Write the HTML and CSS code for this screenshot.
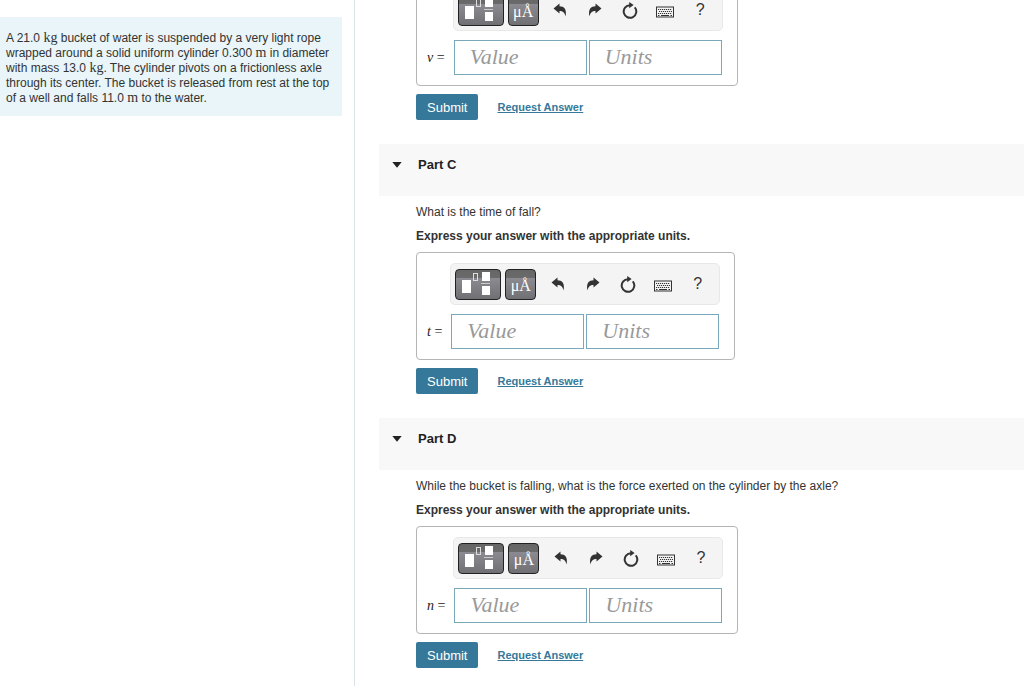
FILE: index.html
```html
<!DOCTYPE html>
<html lang="en">
<head>
    <meta charset="UTF-8">
    <meta name="viewport" content="width=device-width, initial-scale=1.0">
    <title>Bucket and Cylinder</title>
    <link rel="stylesheet" href="styles.css">
</head>
<body>
    <!-- toolbar icons -->
    <svg class="sprite" aria-hidden="true">
        <symbol id="icon-template" viewBox="0 0 28 24">
            <rect x="0" y="8" width="9" height="13" fill="#fff"/>
            <rect x="11.5" y="1.5" width="4" height="7" fill="none" stroke="#ddd"/>
            <rect x="20" y="0" width="8" height="9" fill="#fff"/>
            <rect x="19" y="11" width="9" height="1" fill="#ccc"/>
            <rect x="20" y="14" width="8" height="9" fill="#fff"/>
        </symbol>
        <symbol id="icon-undo" viewBox="0 0 14 14">
            <path d="M0.5 5.5 6.5 0.5V3.2C11 3.2 14 6 12.6 13.5 11.5 9.5 10 8 6.5 8V10.5Z"/>
        </symbol>
        <symbol id="icon-redo" viewBox="0 0 14 14">
            <path d="M13.5 5.5 7.5 0.5V3.2C3 3.2 0 6 1.4 13.5 2.5 9.5 4 8 7.5 8V10.5Z"/>
        </symbol>
        <symbol id="icon-reset" viewBox="0 0 16 17">
            <path d="M12.7 5.3A6.3 6.3 0 1 1 8 3.2" fill="none" stroke="#333" stroke-width="2"/>
            <path d="M7.2 0 11.6 3.1 7.2 6.2Z"/>
        </symbol>
        <symbol id="icon-keyboard" viewBox="0 0 18 12">
            <rect x="0.5" y="1" width="17" height="10" fill="#f4f4f4" stroke="#333"/>
            <path d="M2 3.5H16M3 5.5H16M2 7.5H16" fill="none" stroke="#333" stroke-dasharray="1.2 0.8"/>
            <path d="M2 9.5H3.5M5 9.5H13M14.5 9.5H16" fill="none" stroke="#333"/>
        </symbol>
        <symbol id="icon-caret" viewBox="0 0 10 6">
            <path d="M0.3 0H9.7L5 5.7Z"/>
        </symbol>
    </svg>

    <div class="page">
        <aside class="sidebar">
            <p class="problem">A 21.0 <span class="unit">kg</span> bucket of water is suspended by a very light rope wrapped around a solid uniform cylinder 0.300 <span class="unit">m</span> in diameter with mass 13.0 <span class="unit">kg</span>. The cylinder pivots on a frictionless axle through its center. The bucket is released from rest at the top of a well and falls 11.0 <span class="unit">m</span> to the water.</p>
        </aside>

        <main class="parts">
            <section class="part part-scrolled">
                <form class="part-body">
                    <div class="answer-box">
                        <div class="toolbar">
                            <button type="button" class="tool tool-template" aria-label="Templates"><svg width="28" height="24"><use href="#icon-template"/></svg></button>
                            <button type="button" class="tool tool-symbols">μÅ</button>
                            <button type="button" class="icon-btn" aria-label="Undo"><svg width="14" height="14"><use href="#icon-undo"/></svg></button>
                            <button type="button" class="icon-btn" aria-label="Redo"><svg width="14" height="14"><use href="#icon-redo"/></svg></button>
                            <button type="button" class="icon-btn" aria-label="Reset"><svg width="16" height="17"><use href="#icon-reset"/></svg></button>
                            <button type="button" class="icon-btn" aria-label="Keyboard"><svg class="keyboard" width="18" height="12"><use href="#icon-keyboard"/></svg></button>
                            <button type="button" class="icon-btn">?</button>
                        </div>
                        <label class="variable" for="value-b"><i>v</i> =</label>
                        <div class="fields">
                            <input type="text" id="value-b" class="field" placeholder="Value">
                            <input type="text" class="field" placeholder="Units" aria-label="Units">
                        </div>
                    </div>
                    <div class="actions">
                        <button type="button" class="submit">Submit</button>
                        <a href="#" class="request">Request Answer</a>
                    </div>
                </form>
            </section>

            <section class="part">
                <h2 class="part-header">
                    <button type="button" class="part-toggle"><svg width="10" height="6"><use href="#icon-caret"/></svg>Part C</button>
                </h2>
                <form class="part-body">
                    <p class="question">What is the time of fall?</p>
                    <p class="instruction">Express your answer with the appropriate units.</p>
                    <div class="answer-box">
                        <div class="toolbar">
                            <button type="button" class="tool tool-template" aria-label="Templates"><svg width="28" height="24"><use href="#icon-template"/></svg></button>
                            <button type="button" class="tool tool-symbols">μÅ</button>
                            <button type="button" class="icon-btn" aria-label="Undo"><svg width="14" height="14"><use href="#icon-undo"/></svg></button>
                            <button type="button" class="icon-btn" aria-label="Redo"><svg width="14" height="14"><use href="#icon-redo"/></svg></button>
                            <button type="button" class="icon-btn" aria-label="Reset"><svg width="16" height="17"><use href="#icon-reset"/></svg></button>
                            <button type="button" class="icon-btn" aria-label="Keyboard"><svg class="keyboard" width="18" height="12"><use href="#icon-keyboard"/></svg></button>
                            <button type="button" class="icon-btn">?</button>
                        </div>
                        <label class="variable" for="value-c"><i>t</i> =</label>
                        <div class="fields">
                            <input type="text" id="value-c" class="field" placeholder="Value">
                            <input type="text" class="field" placeholder="Units" aria-label="Units">
                        </div>
                    </div>
                    <div class="actions">
                        <button type="button" class="submit">Submit</button>
                        <a href="#" class="request">Request Answer</a>
                    </div>
                </form>
            </section>

            <section class="part">
                <h2 class="part-header">
                    <button type="button" class="part-toggle"><svg width="10" height="6"><use href="#icon-caret"/></svg>Part D</button>
                </h2>
                <form class="part-body">
                    <p class="question">While the bucket is falling, what is the force exerted on the cylinder by the axle?</p>
                    <p class="instruction">Express your answer with the appropriate units.</p>
                    <div class="answer-box">
                        <div class="toolbar">
                            <button type="button" class="tool tool-template" aria-label="Templates"><svg width="28" height="24"><use href="#icon-template"/></svg></button>
                            <button type="button" class="tool tool-symbols">μÅ</button>
                            <button type="button" class="icon-btn" aria-label="Undo"><svg width="14" height="14"><use href="#icon-undo"/></svg></button>
                            <button type="button" class="icon-btn" aria-label="Redo"><svg width="14" height="14"><use href="#icon-redo"/></svg></button>
                            <button type="button" class="icon-btn" aria-label="Reset"><svg width="16" height="17"><use href="#icon-reset"/></svg></button>
                            <button type="button" class="icon-btn" aria-label="Keyboard"><svg class="keyboard" width="18" height="12"><use href="#icon-keyboard"/></svg></button>
                            <button type="button" class="icon-btn">?</button>
                        </div>
                        <label class="variable" for="value-d"><i>n</i> =</label>
                        <div class="fields">
                            <input type="text" id="value-d" class="field" placeholder="Value">
                            <input type="text" class="field" placeholder="Units" aria-label="Units">
                        </div>
                    </div>
                    <div class="actions">
                        <button type="button" class="submit">Submit</button>
                        <a href="#" class="request">Request Answer</a>
                    </div>
                </form>
            </section>
        </main>
    </div>
</body>
</html>
```
FILE: styles.css
```css
* {
    box-sizing: border-box;
}
body {
    margin: 0;
    font-family: "Liberation Sans", Arial, sans-serif;
    font-size: 12px;
    line-height: 15px;
    color: #333;
    background: #fff;
}
button {
    font-family: inherit;
    border: none;
    padding: 0;
    cursor: pointer;
}
p {
    margin: 0;
}
.sprite {
    display: none;
}
.page {
    display: grid;
    grid-template-columns: 355px 1fr;
    height: 100vh;
    overflow: hidden;
}

/* problem statement */
.sidebar {
    padding: 17px 12px 0 0;
    border-right: 1px solid #d8e4ec;
}
.problem {
    padding: 14px 6px 10px;
    background: #e9f5f8;
}
.unit {
    font-family: "Liberation Serif", "Times New Roman", serif;
    font-size: 14px;
    line-height: 12px;
}

/* parts */
.parts {
    padding-left: 24px;
    overflow: hidden;
}
.part {
    padding-bottom: 24px;
}
/* the column is scrolled part of the way into this one */
.part-scrolled {
    margin-top: -22px;
}
.part-header {
    margin: 0;
    height: 52px;
    padding-top: 13px;
    background: #f8f8f8;
    line-height: 16px;
}
.part-toggle {
    display: flex;
    align-items: center;
    gap: 16px;
    padding-left: 13px;
    background: none;
    color: #222;
    font-size: 13px;
    font-weight: bold;
    line-height: 16px;
}
.part-toggle svg {
    fill: #222;
}
.part-body {
    padding-left: 37px;
}
.question {
    padding-top: 9px;
}
.instruction {
    padding: 9px 0 8px;
    font-weight: bold;
}
.answer-box {
    display: grid;
    grid-template-columns: auto auto;
    justify-content: start;
    align-items: center;
    gap: 9px 8px;
    width: fit-content;
    padding: 10px 14px 10px 10px;
    border: 1px solid #b5b5b5;
    border-radius: 4px;
}

/* toolbar */
.toolbar {
    grid-column: 2;
    display: flex;
    align-items: center;
    height: 42px;
    padding: 0 4px;
    background: #f4f4f4;
    border: 1px solid #e8e8e8;
    border-radius: 5px;
}
.tool {
    display: flex;
    align-items: center;
    justify-content: center;
    height: 31px;
    margin-right: 4px;
    border: 1px solid #222;
    border-radius: 4px;
    background: linear-gradient(#666 0, #6a6a6a 28%, #8a8a90 29%, #707074 100%);
    color: #fff;
}
.tool-template {
    width: 46px;
    padding-right: 4px;
}
.tool-symbols {
    width: 31px;
    padding-top: 4px;
    font-family: "Liberation Serif", "Times New Roman", serif;
    font-size: 16px;
}
.icon-btn {
    display: flex;
    align-items: center;
    justify-content: center;
    width: 35px;
    height: 31px;
    background: none;
    color: #333;
    font-size: 16px;
}
.icon-btn svg {
    fill: #333;
}
.keyboard {
    margin-top: 3px;
}

/* answer fields */
.variable {
    grid-column: 1;
    font-family: "Liberation Serif", "Times New Roman", serif;
    font-size: 14px;
    color: #222;
}
.fields {
    display: flex;
    gap: 2px;
    padding: 0 1px;
}
.field {
    width: 133px;
    height: 35px;
    padding: 0 15px 2px;
    border: 1px solid #79a8bb;
    font-family: "Liberation Serif", "Times New Roman", serif;
    font-size: 22px;
    font-style: italic;
}
.field::placeholder {
    color: #999;
}

/* actions */
.actions {
    display: flex;
    align-items: center;
    gap: 19px;
    padding-top: 8px;
}
.submit {
    height: 26px;
    padding: 0 11px;
    border-radius: 2px;
    background: #35789a;
    color: #fff;
    font-size: 13px;
}
.request {
    color: #35789a;
    font-size: 11px;
    font-weight: bold;
}
```
